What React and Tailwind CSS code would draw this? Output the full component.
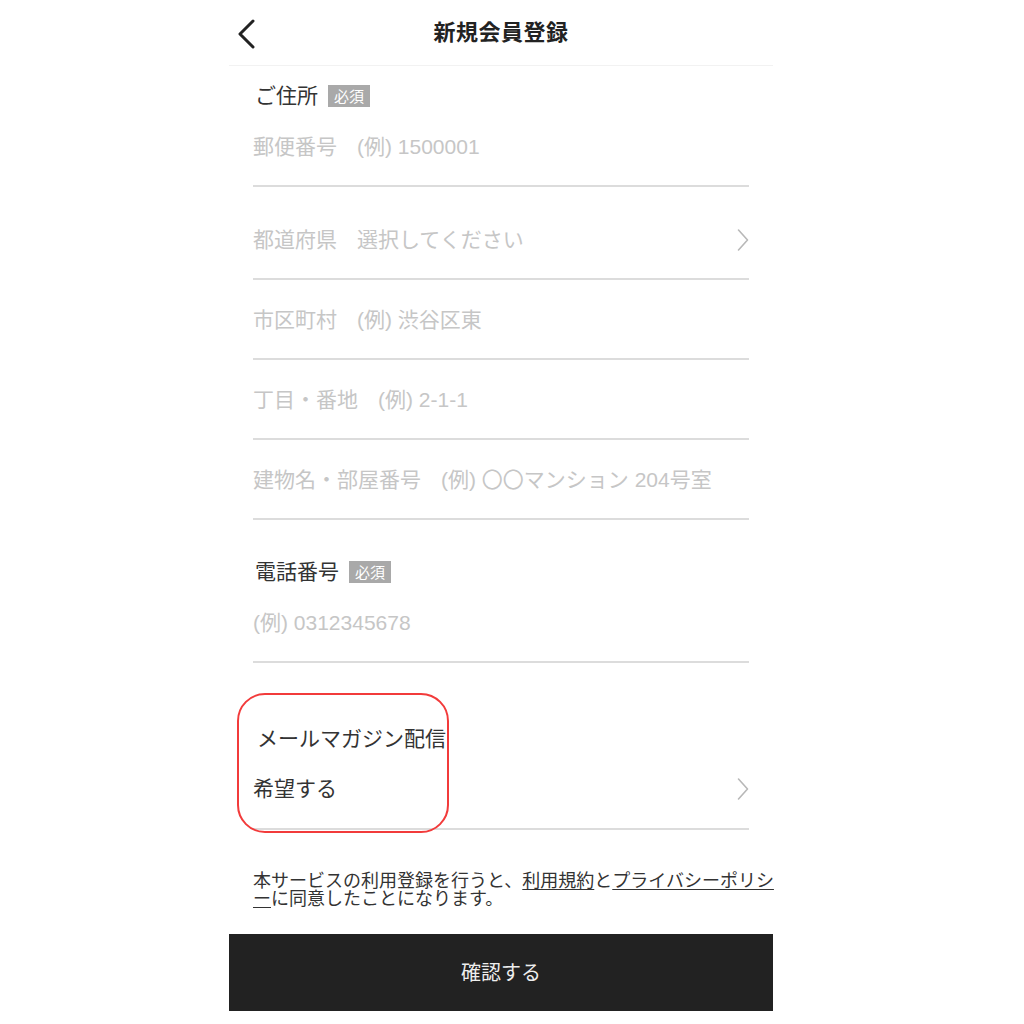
const Chevron = () => (
  <svg width="12" height="24" viewBox="0 0 12 24" fill="none" className="shrink-0">
    <path d="M1.5 2 L10.5 12 L1.5 22" stroke="#b8b8b8" strokeWidth="1.6" strokeLinecap="round" strokeLinejoin="round" />
  </svg>
);

const Badge = () => (
  <span className="ml-[10px] inline-flex items-center h-[22px] px-[6px] bg-[#a9a9a9] text-white text-[15px] leading-none">
    必須
  </span>
);

const Row = ({ label, example, chevron, className = "" }) => (
  <div className={`flex items-center justify-between h-[80px] pt-[2px] border-b-2 border-[#dcdcdc] ${className}`}>
    <div className="flex items-center text-[21px] text-[#c6c6c6] whitespace-nowrap">
      {label && <span>{label}</span>}
      <span className={label ? "ml-[20px]" : ""}>{example}</span>
    </div>
    {chevron && <Chevron />}
  </div>
);

export default function App() {
  return (
    <div
      className="w-full min-h-[1024px] bg-white"
      style={{ fontFamily: '"Liberation Sans", "Noto Sans CJK JP", sans-serif' }}
    >
      <div className="w-[544px] ml-[229px]">
        {/* header */}
        <div className="relative flex items-center justify-center h-[66px] border-b border-[#f2f2f2]">
          <button className="absolute left-[7px] top-[19px]">
            <svg width="22" height="30" viewBox="0 0 22 30" fill="none">
              <path d="M17 2 L4 15 L17 28" stroke="#222" strokeWidth="3" strokeLinecap="round" strokeLinejoin="round" />
            </svg>
          </button>
          <h1 className="text-[22px] font-bold text-[#222] tracking-[0.5px]">新規会員登録</h1>
        </div>

        <div className="px-[24px]">
          {/* address */}
          <div className="flex items-center h-[22px] mt-[19px] pl-[2px] text-[21px] text-[#333]">
            ご住所<Badge />
          </div>
          <Row label="郵便番号" example="(例) 1500001" className="h-[78px]" />
          <Row label="都道府県" example="選択してください" chevron className="mt-[13px]" />
          <Row label="市区町村" example="(例) 渋谷区東" />
          <Row label="丁目・番地" example="(例) 2-1-1" />
          <Row label="建物名・部屋番号" example="(例) 〇〇マンション 204号室" />

          {/* phone */}
          <div className="flex items-center h-[22px] mt-[41px] pl-[2px] text-[21px] text-[#333]">
            電話番号<Badge />
          </div>
          <Row example="(例) 0312345678" />

          {/* mail magazine */}
          <div className="relative pt-[65px]">
            <div className="absolute left-[-16px] top-[30px] w-[212px] h-[140px] rounded-[28px] border-2 border-[#f23b3b]" />
            <div className="flex items-center h-[22px] pl-[4px] text-[21px] text-[#333]">
              メールマガジン配信
            </div>
            <div className="flex items-center justify-between h-[80px] border-b-2 border-[#dcdcdc]">
              <span className="text-[21px] text-[#333]">希望する</span>
              <Chevron />
            </div>
          </div>

          {/* terms */}
          <p className="w-[526px] mt-[42px] text-[18px] leading-[18px] text-[#333]">
            本サービスの利用登録を行うと、<span className="underline underline-offset-2">利用規約</span>と
            <span className="underline underline-offset-2">プライバシーポリシー</span>に同意したことになります。
          </p>
        </div>

        <button className="mt-[26px] w-full h-[77px] bg-[#222] text-[#eee] text-[20px] flex items-center justify-center">
          確認する
        </button>
      </div>
    </div>
  );
}
